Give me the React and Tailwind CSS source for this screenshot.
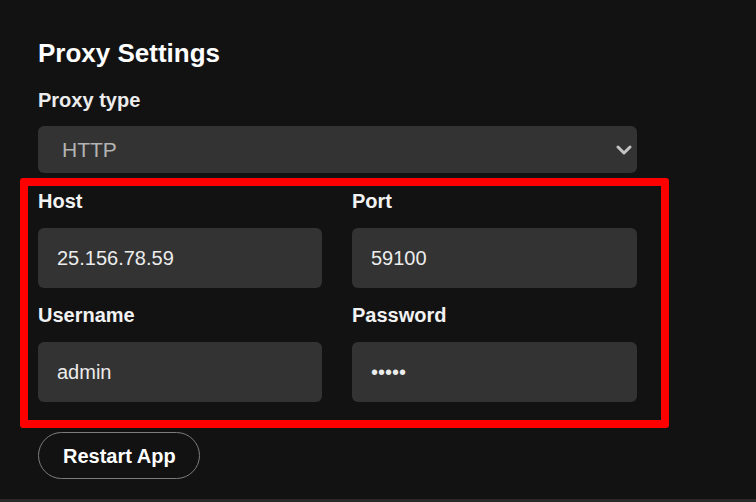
import React from "react";

const Field = ({ label, value, secret }) => (
  <div className="flex flex-col">
    <label className="h-[24px] text-[20px] leading-[24px] font-bold text-[#f2f2f2]">
      {label}
    </label>
    <div className="mt-[15px] h-[60px] rounded-[6px] bg-[#333333] pl-[19px] flex items-center text-[20px] leading-[23px] text-[#ececec]">
      {secret ? <span className="tracking-[0px]">•••••</span> : value}
    </div>
  </div>
);

const App = () => {
  return (
    <div
      className="w-[756px] h-[502px] bg-[#121212] flex flex-col overflow-hidden"
      style={{ fontFamily: '"Liberation Sans", Arial, sans-serif' }}
    >
      <div className="flex-1 pl-[38px] pt-[38px]">
        <h2 className="text-[26px] leading-[30px] font-bold text-white">
          Proxy Settings
        </h2>
        <div className="mt-[20px] h-[24px] text-[20px] leading-[24px] font-bold text-[#ececec]">
          Proxy type
        </div>

        {/* select */}
        <div className="mt-[14px] w-[599px] h-[47px] rounded-[6px] bg-[#333333] flex items-center justify-between pl-[24px] pr-[5px]">
          <span className="text-[21px] text-[#b3b3b3]">HTTP</span>
          <svg width="16" height="10" viewBox="0 0 16 10" className="mr-[0px]">
            <path
              d="M2 2 L8 8 L14 2"
              fill="none"
              stroke="#c4c4c4"
              strokeWidth="3"
              strokeLinecap="round"
              strokeLinejoin="round"
            />
          </svg>
        </div>

        {/* highlighted fields */}
        <div className="mt-[5px] -ml-[18px] w-[649px] border-[8px] border-[#ff0000] rounded-[3px] pl-[10px] pr-[24px] pt-[3px] pb-[18px]">
          <div className="grid grid-cols-[284px_285px] gap-x-[30px] gap-y-[15px]">
            <Field label="Host" value="25.156.78.59" />
            <Field label="Port" value="59100" />
            <Field label="Username" value="admin" />
            <Field label="Password" secret />
          </div>
        </div>

        <button className="mt-[4px] h-[47px] w-[162px] rounded-full border border-[#7d7d7d] pl-[24px] text-left text-[20px] font-bold text-white">
          Restart App
        </button>
      </div>
      <div className="h-[3px] bg-[#2a2a2a]" />
    </div>
  );
};

export default App;
